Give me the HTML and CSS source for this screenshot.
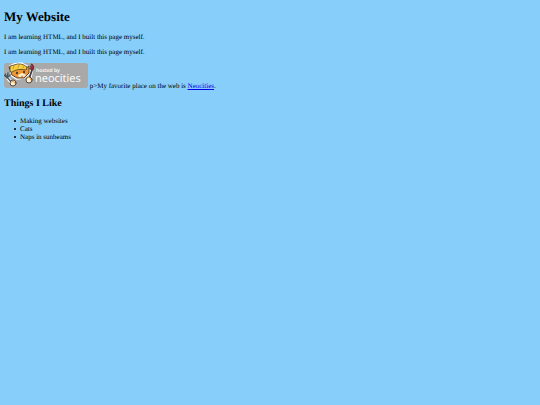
FILE: index.html
```html
<!DOCTYPE html>
<html lang="en">
<head>
<meta charset="utf-8">
<title>My Website</title>
<link rel="stylesheet" href="styles.css">
</head>
<body>
<h1>My Website</h1>
<p>I am learning HTML, and I built this page myself.</p>
<p>I am learning HTML, and I built this page myself.</p>
<div class="hosting">
<a class="badge" href="#"><svg width="84" height="25" viewBox="0 0 84 25" role="img" aria-label="Hosted by Neocities">
<rect x="0" y="0" width="84" height="25" rx="3" fill="#a9a9a9"/>
<g stroke-linejoin="round" stroke-linecap="round">
<path d="M7 10 6 3 10 1 17 0 23 3 25 4 25 11 20 15 13 16 8 13Z" fill="#fff" stroke="#fff" stroke-width="1.6"/>
<path d="M2 13 7 19M28 4 26 15" fill="none" stroke="#fff" stroke-width="3.4"/>
<path d="M7 9 5 4 11 4 22 5 25 3 25 10 20 15 13 15 8 12Z" fill="#ee9838" stroke="#4c3828" stroke-width=".9"/>
<path d="M6 8 6 3 10 2Q17-1 23 4L22 7Q14 5 8 9Z" fill="#f8cf43" stroke="#514020" stroke-width=".8"/>
<path d="M10 3 9 6M15 2 14 5M20 3 19 5" stroke="#ad7b20" stroke-width=".6" fill="none"/>
<path d="M14 12 18 10 22 12 20 14 15 14Z" fill="#fff1d3"/>
<path d="M16 12Q18 14 20 12L18 14Z" fill="#a43024"/>
<ellipse cx="13" cy="10" rx=".8" ry="1.2" fill="#222"/><ellipse cx="20" cy="9" rx=".8" ry="1.2" fill="#222"/>
<path d="M3 14 8 20M0 12 3 15 4 10M1.5 11 3 15 6 12" fill="none" stroke="#455863" stroke-width="1.3"/>
<path d="M28 7 25 16" stroke="#42383b" stroke-width="1.8"/>
<path d="M28 1Q31 3 29 7L26 6Z" fill="#a72736" stroke="#4d2530" stroke-width=".9"/>
<circle cx="9" cy="20" r="3" fill="#fff3d8" stroke="#43362b" stroke-width=".9"/>
<circle cx="25" cy="17" r="3" fill="#fff3d8" stroke="#43362b" stroke-width=".9"/>
<path d="M7 19Q9 17 11 20M23 15Q26 13 27 17" stroke="#e89a38" stroke-width="1" fill="none"/>
</g>
<text class="badge-small" x="32" y="9">hosted by</text>
<text class="badge-name" x="31" y="19">neocities</text>
</svg></a>
p&gt;My favorite place on the web is <a href="#">Neocities</a>.
</div>
<h2>Things I Like</h2>
<ul>
<li>Making websites</li>
<li>Cats</li>
<li>Naps in sunbeams</li>
</ul>
</body>
</html>
```
FILE: styles.css
```css
body {
  margin: 9px 4px;
  background: #87cefa;
  color: #000;
  font: 7px/8px "Liberation Serif", serif;
  text-rendering: geometricPrecision;
}
h1 {
  margin: 0 0 8px;
  font-size: 13px;
  line-height: 16px;
}
p {
  margin: 0 0 7px;
}
.hosting {
  margin: 7px 0 8px;
}
.badge svg {
  overflow: visible;
  vertical-align: baseline;
}
.badge-small,
.badge-name {
  fill: #fff;
  font-family: "Open Sans", sans-serif;
}
.badge-small {
  font-size: 5px;
  font-weight: 600;
}
.badge-name {
  font-size: 11px;
}
h2 {
  margin: 0 0 7px;
  font-size: 10px;
  line-height: 12px;
}
ul {
  margin: 0;
  padding-left: 10px;
  list-style: none;
}
li {
  display: flex;
  align-items: center;
  gap: 4px;
}
li::before {
  content: "";
  width: 2px;
  height: 2px;
  border-radius: 50%;
  background: #000;
}
```
